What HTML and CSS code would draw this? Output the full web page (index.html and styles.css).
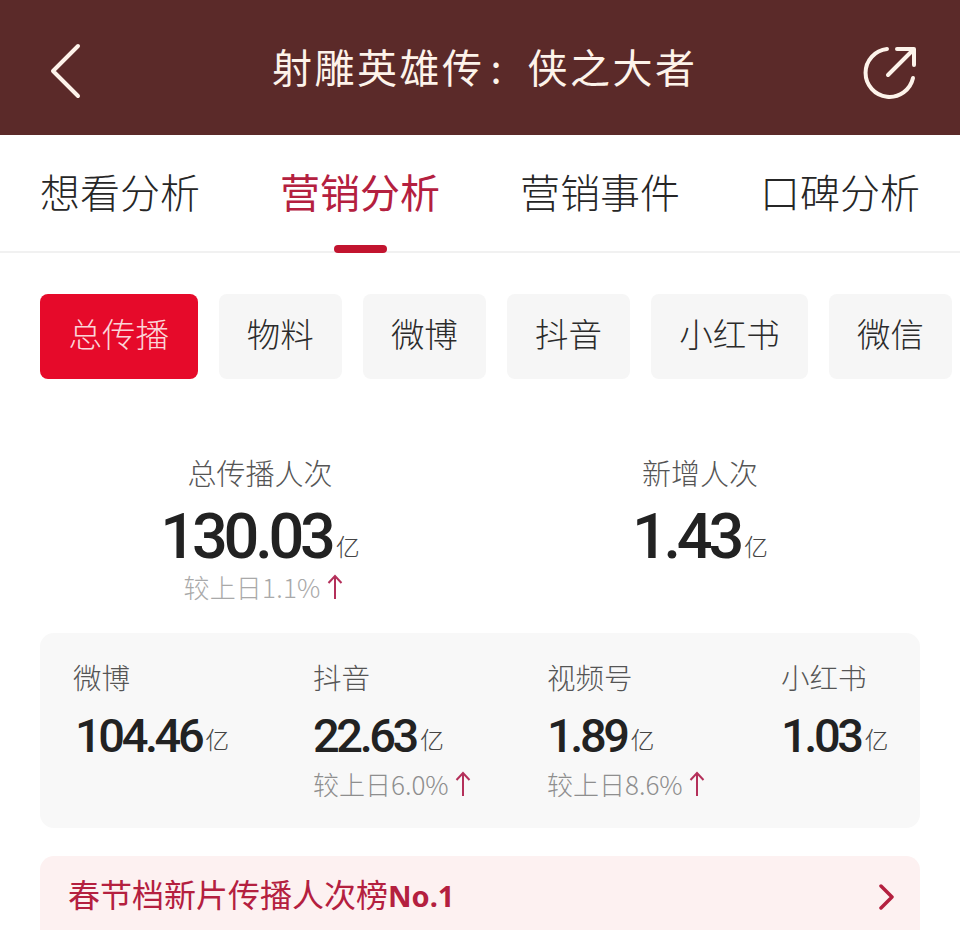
FILE: index.html
```html
<!DOCTYPE html>
<html lang="zh-CN">
<head>
<meta charset="utf-8">
<title>射雕英雄传:侠之大者</title>
<link rel="stylesheet" href="styles.css">
</head>
<body>
<header class="topbar">
  <svg class="back" viewBox="0 0 34 56" width="34" height="56"><path d="M28 3 L3 28 L28 53" fill="none" stroke="#fdf3ea" stroke-width="4" stroke-linecap="round" stroke-linejoin="round"/></svg>
  <h1 class="title">射雕英雄传<span class="colon">:</span>侠之大者</h1>
  <svg class="share" viewBox="0 0 60 60" width="60" height="60"><path d="M28 6 A24 24 0 1 0 54 35" fill="none" stroke="#fdf3ea" stroke-width="4" stroke-linecap="round"/><path d="M29 32 L54 7 M38 6 H55 V22" fill="none" stroke="#fdf3ea" stroke-width="4" stroke-linecap="round" stroke-linejoin="round"/></svg>
</header>
<nav class="tabs">
  <div class="tab">想看分析</div>
  <div class="tab tab-active">营销分析</div>
  <div class="tab">营销事件</div>
  <div class="tab">口碑分析</div>
</nav>
<div class="chips">
  <div class="chip chip-active">总传播</div>
  <div class="chip">物料</div>
  <div class="chip">微博</div>
  <div class="chip">抖音</div>
  <div class="chip">小红书</div>
  <div class="chip">微信</div>
</div>
<section class="summary">
  <div class="sum-item">
    <div class="sum-label">总传播人次</div>
    <div class="sum-value"><span class="sum-num">130.03</span><span class="sum-unit">亿</span></div>
    <div class="delta sum-delta">较上日1.1%<svg class="arrow" viewBox="0 0 16 26" width="16" height="26"><path d="M8 25 V2 M1.5 9 L8 2 L14.5 9" fill="none" stroke="#b4305a" stroke-width="2"/></svg></div>
  </div>
  <div class="sum-item">
    <div class="sum-label">新增人次</div>
    <div class="sum-value"><span class="sum-num">1.43</span><span class="sum-unit">亿</span></div>
  </div>
</section>
<section class="platforms">
  <div class="pf">
    <div class="pf-label">微博</div>
    <div class="pf-value pf-indent"><span class="pf-num">104.46</span><span class="pf-unit">亿</span></div>
  </div>
  <div class="pf">
    <div class="pf-label">抖音</div>
    <div class="pf-value"><span class="pf-num">22.63</span><span class="pf-unit">亿</span></div>
    <div class="delta">较上日6.0%<svg class="arrow" viewBox="0 0 16 26" width="16" height="26"><path d="M8 25 V2 M1.5 9 L8 2 L14.5 9" fill="none" stroke="#b4305a" stroke-width="2"/></svg></div>
  </div>
  <div class="pf">
    <div class="pf-label">视频号</div>
    <div class="pf-value"><span class="pf-num">1.89</span><span class="pf-unit">亿</span></div>
    <div class="delta">较上日8.6%<svg class="arrow" viewBox="0 0 16 26" width="16" height="26"><path d="M8 25 V2 M1.5 9 L8 2 L14.5 9" fill="none" stroke="#b4305a" stroke-width="2"/></svg></div>
  </div>
  <div class="pf">
    <div class="pf-label">小红书</div>
    <div class="pf-value"><span class="pf-num">1.03</span><span class="pf-unit">亿</span></div>
  </div>
</section>
<section class="banner">
  <div class="banner-text">春节档新片传播人次榜<b class="banner-no">No.1</b></div>
  <svg class="chev" viewBox="0 0 16 26" width="16" height="26"><path d="M3 2 L14 13 L3 24" fill="none" stroke="#b4203f" stroke-width="3.5" stroke-linecap="round" stroke-linejoin="round"/></svg>
</section>
</body>
</html>
```
FILE: styles.css
```css
* { box-sizing: border-box; }
html, body { margin: 0; padding: 0; }
body {
  width: 960px;
  height: 930px;
  overflow: hidden;
  background: #fff;
  font-family: "Noto Sans CJK SC", "Noto Sans", sans-serif;
  color: #2a2a2a;
}
.topbar {
  height: 135px;
  background: #5b2a29;
  display: flex;
  align-items: center;
  padding: 0 41px 0 50px;
}
.back { flex: none; margin-top: 7px; }
.title {
  margin: -4px 0 0 188px;
  font-size: 40px;
  font-weight: 400;
  letter-spacing: 2.5px;
  line-height: 56px;
  color: #fdf3ea;
  white-space: nowrap;
}
.colon {
  display: inline-block;
  width: 43px;
  padding-left: 6px;
}
.share { flex: none; margin-left: auto; margin-top: 11px; }
.tabs {
  height: 118px;
  display: grid;
  grid-template-columns: repeat(4, 1fr);
  border-bottom: 2px solid #f1f1f1;
}
.tab {
  position: relative;
  text-align: center;
  font-size: 40px;
  font-weight: 300;
  line-height: 112px;
  color: #262626;
}
.tab-active { color: #b4203f; font-weight: 400; }
.tab-active::after {
  content: "";
  position: absolute;
  left: 94px;
  bottom: -2px;
  width: 53px;
  height: 8px;
  border-radius: 4px;
  background: #c2142f;
}
.chips {
  display: flex;
  gap: 21.2px;
  padding: 41px 0 0 40px;
}
.chip {
  height: 85px;
  padding: 0 28px;
  border-radius: 8px;
  background: #f6f6f6;
  font-size: 33.5px;
  font-weight: 300;
  line-height: 78px;
  color: #2b2b2b;
  white-space: nowrap;
}
.chip-active { background: #e60a2a; color: #fbd5d8; padding: 0 28.5px; }
.summary {
  display: grid;
  grid-template-columns: 1fr 1fr;
  padding: 0 40px;
  margin-top: 73px;
  height: 181px;
}
.sum-item { display: flex; flex-direction: column; align-items: center; }
.sum-label { font-size: 29px; font-weight: 300; line-height: 40px; color: #555; }
.sum-value { display: flex; align-items: baseline; height: 56px; line-height: 56px; margin-top: 17px; }
.sum-num {
  font-family: Roboto, sans-serif;
  font-size: 63px;
  font-weight: 500;
  letter-spacing: -4.2px;
  color: #222;
}
.sum-unit { font-size: 24px; font-weight: 300; color: #444; margin-left: 4px; transform: translateY(-2px); }
.delta {
  display: flex;
  align-items: center;
  font-size: 26px;
  font-weight: 300;
  line-height: 30px;
  color: #8e8e8e;
  white-space: nowrap;
}
.sum-delta { color: #a9a9a9; margin-top: 7px; padding-left: 6px; letter-spacing: 0.2px; }
.arrow { flex: none; margin-left: 6px; }
.platforms {
  margin: 0 40px;
  height: 195px;
  background: #f8f8f8;
  border-radius: 14px;
  padding: 23px 0 0 33px;
  display: grid;
  grid-template-columns: 240px 234px 234px 1fr;
}
.pf-label { font-size: 28.5px; font-weight: 300; line-height: 42px; color: #555; }
.pf-value { display: flex; align-items: baseline; height: 54px; line-height: 54px; margin-top: 11px; }
.pf-indent { padding-left: 2px; }
.pf-num {
  font-family: Roboto, sans-serif;
  font-size: 47px;
  font-weight: 500;
  letter-spacing: -3.4px;
  color: #222;
}
.pf-unit { font-size: 24px; font-weight: 300; color: #444; margin-left: 4px; transform: translateY(-3px); }
.pf .delta { margin-top: 6px; }
.banner {
  margin: 28px 40px 0;
  height: 90px;
  background: #fdf1f1;
  border-radius: 14px;
  display: flex;
  align-items: flex-start;
  justify-content: space-between;
  padding: 15px 26px 0 28px;
}
.banner-text {
  font-size: 32px;
  font-weight: 400;
  line-height: 44px;
  color: #b4203f;
  white-space: nowrap;
}
.banner-no { font-family: "Noto Sans", sans-serif; font-weight: 700; font-size: 29px; }
.chev { margin-top: 13px; }
```
